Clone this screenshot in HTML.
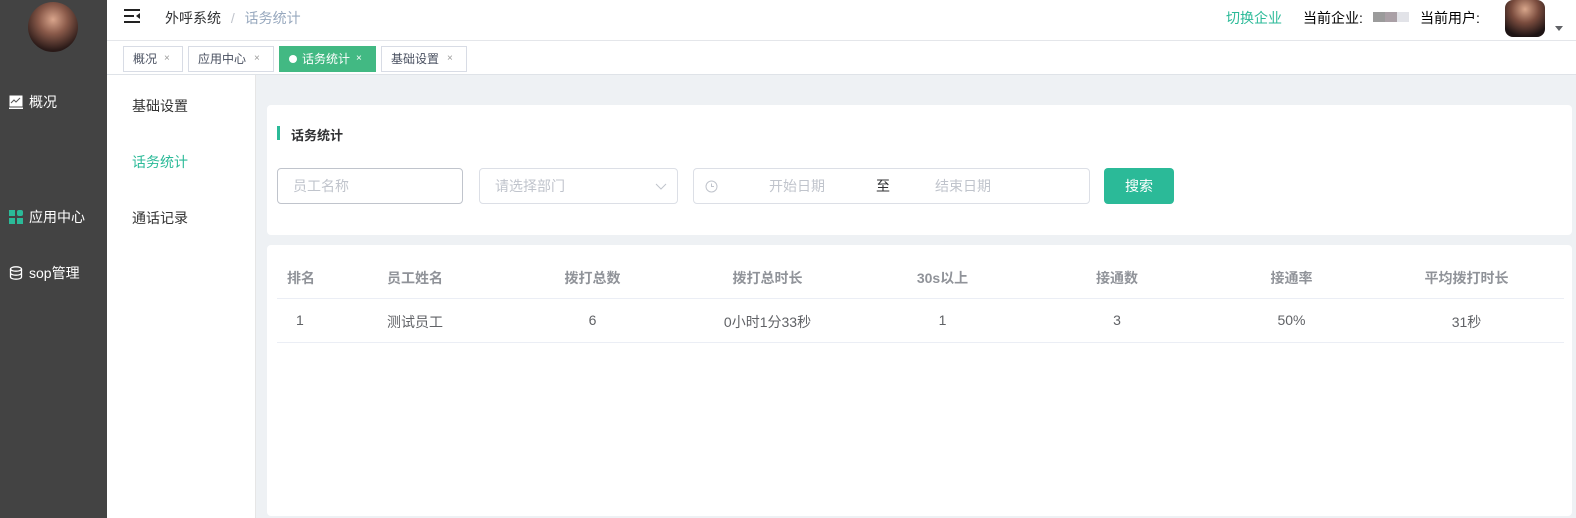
<!DOCTYPE html>
<html><head><meta charset="utf-8"><style>
*{margin:0;padding:0;box-sizing:border-box}
body{width:1576px;height:518px;overflow:hidden;font-family:"Liberation Sans","Noto Sans CJK SC",sans-serif;font-size:14px;color:#333;background:#fff;position:relative}
.abs{position:absolute}
.side{left:0;top:0;width:107px;height:518px;background:#434343}
.avatar{left:28px;top:2px;width:50px;height:50px;border-radius:50%;background:radial-gradient(circle at 50% 35%,#d9a58c 0,#8a5a4a 35%,#2a1a18 75%)}
.mi{color:#fff;font-size:14px;left:9px;display:flex;align-items:center;gap:6px}
.hdr{left:107px;top:0;right:0;height:41px;border-bottom:1px solid #e4e6ea}
.tabs{left:107px;top:41px;right:0;height:34px;border-bottom:1px solid #dfe3e8}
.tab{position:absolute;top:5px;height:26px;border:1px solid #d8dce5;font-size:12px;color:#495060;line-height:24px;padding-left:9px}
.tab .x{position:absolute;font-size:10px;color:#999;top:0}
.sub{left:107px;top:75px;width:149px;height:443px;background:#fff;border-right:1px solid #e6e6e6}
.sub div{position:absolute;left:25px;font-size:14px;color:#333}
.main{left:256px;top:75px;right:0;height:443px;background:#eef1f4}
.card{background:#fff;border-radius:4px}
.inp{position:absolute;top:168px;height:36px;border:1px solid #dcdfe6;border-radius:4px;color:#c0c4cc;font-size:14px;line-height:34px}
.row{position:absolute;left:277px;width:1287px;display:flex}
.row div{text-align:center}
</style></head><body>
<div class="abs side"></div>
<div class="abs avatar"></div>
<div class="abs mi" style="top:92px"><svg width="14" height="14" viewBox="0 0 14 14"><rect x="0.5" y="0.5" width="13" height="11" fill="#fff"/><path d="M2 8 L5 5 L7 7 L11 3" stroke="#555" fill="none"/><rect x="0" y="12.5" width="14" height="1.5" fill="#fff"/></svg>概况</div>
<div class="abs mi" style="top:207px"><svg width="14" height="14" viewBox="0 0 14 14"><rect x="0" y="0" width="6" height="6" fill="#2bba98"/><rect x="8" y="0" width="6" height="6" rx="2" fill="#2bba98"/><rect x="0" y="8" width="6" height="6" fill="#2bba98"/><rect x="8" y="8" width="6" height="6" fill="#2bba98"/></svg>应用中心</div>
<div class="abs mi" style="top:263px"><svg width="14" height="14" viewBox="0 0 14 14" fill="none" stroke="#fff" stroke-width="1.3"><ellipse cx="7" cy="3" rx="5.5" ry="2.2"/><path d="M1.5 3v8c0 1.2 2.5 2.2 5.5 2.2s5.5-1 5.5-2.2V3M1.5 7c0 1.2 2.5 2.2 5.5 2.2s5.5-1 5.5-2.2"/></svg>sop管理</div>

<div class="abs hdr"></div>
<svg class="abs" style="left:124px;top:9px" width="16" height="14" viewBox="0 0 16 14"><path d="M0 1h16M0 7h10M0 13h16" stroke="#222" stroke-width="2"/><path d="M16 4l-4 3 4 3z" fill="#222"/></svg>
<div class="abs" style="left:165px;top:8px;font-size:14px;color:#303133">外呼系统 <span style="color:#c0c4cc;margin:0 6px">/</span> <span style="color:#97a8be">话务统计</span></div>
<div class="abs" style="left:1226px;top:8px;color:#2bba98">切换企业</div>
<div class="abs" style="left:1303px;top:8px;color:#000">当前企业:</div>
<div class="abs" style="left:1373px;top:12px;width:12px;height:10px;background:#9b9b9b"></div>
<div class="abs" style="left:1385px;top:12px;width:12px;height:10px;background:#aaa0a6"></div>
<div class="abs" style="left:1397px;top:12px;width:12px;height:10px;background:#e2e3e8"></div>
<div class="abs" style="left:1420px;top:8px;color:#000">当前用户:</div>
<div class="abs" style="left:1505px;top:0;width:40px;height:37px;border-radius:8px;background:radial-gradient(circle at 50% 25%,#d8a68b 0,#7a4c3e 40%,#1e1414 80%)"></div>
<div class="abs" style="left:1555px;top:26px;width:0;height:0;border-left:4px solid transparent;border-right:4px solid transparent;border-top:5px solid #606266"></div>

<div class="abs tabs">
<div class="tab" style="left:16px;width:60px">概况<span class="x" style="left:40px">×</span></div>
<div class="tab" style="left:81px;width:86px">应用中心<span class="x" style="left:65px">×</span></div>
<div class="tab" style="left:172px;width:97px;background:#42b983;border-color:#42b983;color:#fff"><span style="display:inline-block;width:8px;height:8px;border-radius:50%;background:#fff;margin-right:5px"></span>话务统计<span class="x" style="left:76px;color:#fff">×</span></div>
<div class="tab" style="left:274px;width:86px">基础设置<span class="x" style="left:65px">×</span></div>
</div>

<div class="abs sub">
<div style="top:21px">基础设置</div>
<div style="top:77px;color:#2bba98">话务统计</div>
<div style="top:133px">通话记录</div>
</div>
<div class="abs main"></div>
<div class="abs card" style="left:267px;top:105px;width:1305px;height:130px"></div>
<div class="abs card" style="left:267px;top:245px;width:1305px;height:271px"></div>

<div class="abs" style="left:277px;top:126px;width:3px;height:14px;background:#2bba98"></div>
<div class="abs" style="left:291px;top:125px;font-size:13px;font-weight:bold;color:#303133">话务统计</div>
<div class="inp" style="left:277px;width:186px;padding-left:15px;border-color:#c0c4cc">员工名称</div>
<div class="inp" style="left:479px;width:199px;padding-left:15px">请选择部门<svg style="position:absolute;right:10px;top:14px" width="12" height="7" viewBox="0 0 12 7"><path d="M1 1l5 5 5-5" stroke="#c0c4cc" fill="none"/></svg></div>
<div class="inp" style="left:693px;width:397px"><svg style="position:absolute;left:11px;top:11px" width="13" height="13" viewBox="0 0 13 13" fill="none" stroke="#c0c4cc"><circle cx="6.5" cy="6.5" r="5.5"/><path d="M6.5 3.5v3h2.5"/></svg><span style="position:absolute;left:75px">开始日期</span><span style="position:absolute;left:182px;color:#303133">至</span><span style="position:absolute;left:241px">结束日期</span></div>
<div class="abs" style="left:1104px;top:168px;width:70px;height:36px;background:#2bba98;border-radius:4px;color:#fff;text-align:center;line-height:36px;font-size:14px">搜索</div>

<div class="row" style="top:268px;font-weight:bold;color:#909399;font-size:14px">
<div style="width:100px;text-align:left;padding-left:10px">排名</div><div style="width:128px;text-align:left;padding-left:10px">员工姓名</div><div style="width:175px">拨打总数</div><div style="width:175px">拨打总时长</div><div style="width:175px">30s以上</div><div style="width:174px">接通数</div><div style="width:175px">接通率</div><div style="width:175px">平均拨打时长</div>
</div>
<div class="abs" style="left:277px;top:298px;width:1287px;height:1px;background:#ebeef5"></div>
<div class="row" style="top:312px;color:#606266;font-size:14px">
<div style="width:100px;text-align:left;padding-left:19px">1</div><div style="width:128px;text-align:left;padding-left:10px">测试员工</div><div style="width:175px">6</div><div style="width:175px">0小时1分33秒</div><div style="width:175px">1</div><div style="width:174px">3</div><div style="width:175px">50%</div><div style="width:175px">31秒</div>
</div>
<div class="abs" style="left:277px;top:342px;width:1287px;height:1px;background:#ebeef5"></div>
</body></html>
